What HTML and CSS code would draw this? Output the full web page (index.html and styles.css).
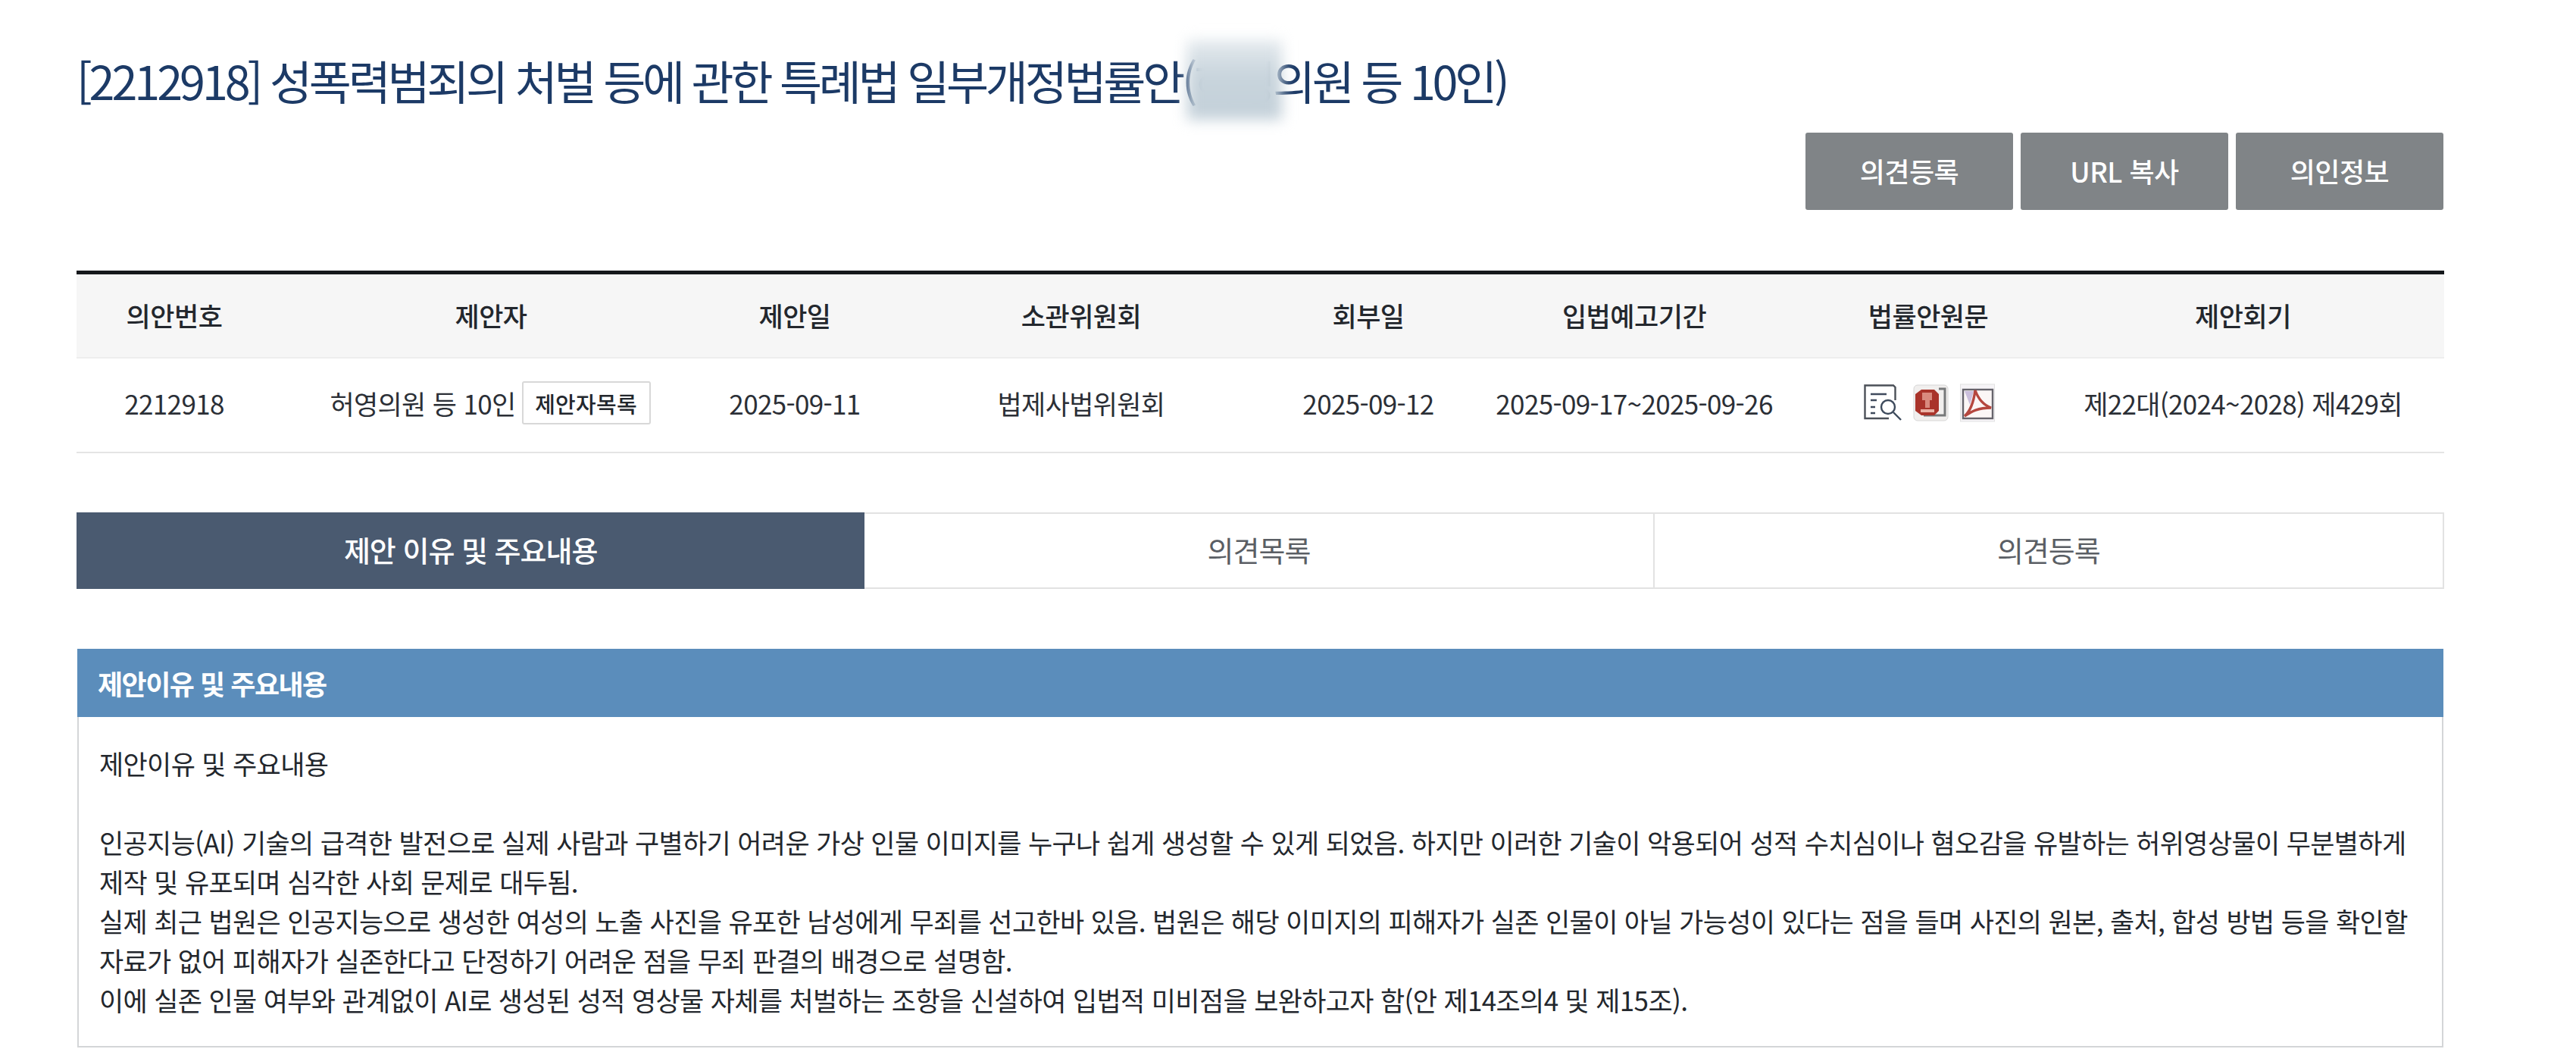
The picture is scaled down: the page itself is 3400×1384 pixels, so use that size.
FILE: index.html
```html
<!DOCTYPE html>
<html lang="ko">
<head>
<meta charset="utf-8">
<title>의안 상세</title>
<link rel="stylesheet" href="styles.css">
</head>
<body>
<main class="page">
  <h1 class="title"><span class="bill-no">[2212918]</span> 성폭력범죄의 처벌 등에 관한 특례법 일부개정법률안(<span class="masked">허영의</span>원 등 10인)</h1>
  <div class="actions">
    <a class="action">의견등록</a>
    <a class="action">URL 복사</a>
    <a class="action">의인정보</a>
  </div>
  <table class="info">
    <colgroup>
      <col class="c1"><col class="c2"><col class="c3"><col class="c4"><col class="c5"><col class="c6"><col class="c7"><col class="c8">
    </colgroup>
    <thead>
      <tr><th>의안번호</th><th>제안자</th><th>제안일</th><th>소관위원회</th><th>회부일</th><th>입법예고기간</th><th>법률안원문</th><th>제안회기</th></tr>
    </thead>
    <tbody>
      <tr>
        <td>2212918</td>
        <td><div class="proposer"><span>허영의원 등 10인</span><a class="mini">제안자목록</a></div></td>
        <td>2025-09-11</td>
        <td>법제사법위원회</td>
        <td>2025-09-12</td>
        <td>2025-09-17~2025-09-26</td>
        <td>
          <div class="icons">
            <svg class="ico" width="52" height="52" viewBox="0 0 52 52" fill="none">
              <path d="M34 46H2.5V2.5H40L42.5 5V22" stroke="#4b5058" stroke-width="2.4"/>
              <path d="M10 14H31M10 22H18M10 31H16M10 39H16" stroke="#3f4a5c" stroke-width="2.4"/>
              <circle cx="33" cy="31" r="9" fill="#fff" stroke="#3d4a5c" stroke-width="2.4"/>
              <path d="M40 38L50 48" stroke="#3d4a5c" stroke-width="2.4"/>
            </svg>
            <svg class="ico" width="48" height="52" viewBox="0 0 48 52" fill="none">
              <rect x="1" y="2" width="45" height="47" rx="5" fill="#f1efee" stroke="#d6d6d6"/>
              <path d="M34 7H42V42H14" stroke="#77797a" stroke-width="3"/>
              <path d="M11 8H28L34 14V36L28 42H11L3 36V14Z" fill="#a9332a"/>
              <path d="M12 12H25V22H22V32H16V22H12Z" fill="#d98a7e"/>
              <path d="M10 34H28V38H10Z" fill="#eab3a6"/>
            </svg>
            <svg class="ico" width="46" height="52" viewBox="0 0 46 52" fill="none">
              <rect x="0.5" y="1" width="45" height="49" fill="#f6f4f7" stroke="#e2e2e2"/>
              <rect x="4" y="8" width="39" height="38" fill="#fbf6f6" stroke="#66646c" stroke-width="2.4"/>
              <path d="M6 10H18L13 28Z" fill="#cbbfdc"/>
              <path d="M20 9C18 24 14 36 6 43C14 38 22 32 41 32C30 28 24 20 20 9Z" fill="none" stroke="#b5473f" stroke-width="3.4"/>
            </svg>
          </div>
        </td>
        <td>제22대(2024~2028) 제429회</td>
      </tr>
    </tbody>
  </table>
  <nav class="tabs">
    <a class="tab tab-on">제안 이유 및 주요내용</a>
    <a class="tab">의견목록</a>
    <a class="tab">의견등록</a>
  </nav>
  <section class="panel">
    <h2 class="panel-head">제안이유 및 주요내용</h2>
    <p class="panel-body">제안이유 및 주요내용<br><br>인공지능(AI) 기술의 급격한 발전으로 실제 사람과 구별하기 어려운 가상 인물 이미지를 누구나 쉽게 생성할 수 있게 되었음. 하지만 이러한 기술이 악용되어 성적 수치심이나 혐오감을 유발하는 허위영상물이 무분별하게<br>제작 및 유포되며 심각한 사회 문제로 대두됨.<br>실제 최근 법원은 인공지능으로 생성한 여성의 노출 사진을 유포한 남성에게 무죄를 선고한바 있음. 법원은 해당 이미지의 피해자가 실존 인물이 아닐 가능성이 있다는 점을 들며 사진의 원본, 출처, 합성 방법 등을 확인할<br>자료가 없어 피해자가 실존한다고 단정하기 어려운 점을 무죄 판결의 배경으로 설명함.<br>이에 실존 인물 여부와 관계없이 AI로 생성된 성적 영상물 자체를 처벌하는 조항을 신설하여 입법적 미비점을 보완하고자 함(안 제14조의4 및 제15조).</p>
  </section>
</main>
</body>
</html>
```
FILE: styles.css
```css
* { box-sizing: border-box; }
html, body { margin: 0; padding: 0; background: #fff; }
body {
  font-family: "Noto Sans CJK KR", "Noto Sans", sans-serif;
  color: #2b2f36;
  height: 1384px;
  overflow: hidden;
}
.page { width: 3125px; margin-left: 101px; }
.title {
  margin: 0;
  padding: 68px 0 0 0;
  height: 175px;
  font-size: 61px;
  line-height: 76px;
  font-weight: 400;
  letter-spacing: -4.3px;
  color: #1c3a66;
  white-space: nowrap;
}
.bill-no { letter-spacing: -4px; }
.masked { position: relative; }
.masked::after {
  content: "";
  position: absolute;
  left: -9px;
  right: 40px;
  top: -8px;
  bottom: -8px;
  background: linear-gradient(180deg, #e4eaee 0%, #c8d4dc 45%, #c3d0d9 100%);
  filter: blur(9px);
}
.actions { display: flex; justify-content: flex-end; gap: 10px; height: 102px; padding-right: 1px; }
.action {
  width: 274px;
  height: 102px;
  padding-bottom: 2px;
  display: flex;
  align-items: center;
  justify-content: center;
  background: #808487;
  border-radius: 3px;
  color: #fff;
  font-size: 36px;
  font-weight: 500;
  letter-spacing: -0.5px;
}
.info {
  width: 100%;
  margin-top: 80px;
  border-collapse: collapse;
  table-layout: fixed;
  border-top: 5px solid #15181c;
}
.c1 { width: 258px; } .c2 { width: 578px; } .c3 { width: 224px; } .c4 { width: 532px; }
.c5 { width: 226px; } .c6 { width: 476px; } .c7 { width: 300px; } .c8 { width: 531px; }
.info th {
  height: 112px;
  padding: 0 0 2px;
  background: #f6f6f6;
  font-size: 35px;
  font-weight: 500;
  letter-spacing: -0.5px;
  color: #23272d;
  border-bottom: 2px solid #eee;
}
.info td {
  height: 125px;
  padding: 0 0 5px;
  text-align: center;
  font-size: 35px;
  font-weight: 400;
  letter-spacing: -0.65px;
  color: #2b2f36;
  border-bottom: 2px solid #e4e4e4;
  white-space: nowrap;
}
.proposer { display: flex; align-items: center; justify-content: center; gap: 8px; padding-right: 2px; }
.mini {
  display: flex;
  align-items: center;
  justify-content: center;
  width: 170px;
  height: 57px;
  border: 2px solid #d8d8d8;
  border-radius: 3px;
  font-size: 29px;
  font-weight: 500;
  letter-spacing: 0.3px;
  color: #23272d;
}
.icons { display: flex; align-items: center; justify-content: center; gap: 14px; padding-left: 2px; }
.ico { display: block; flex: none; }
.tabs { display: flex; margin-top: 78px; height: 101px; }
.tab {
  flex: 1;
  display: flex;
  align-items: center;
  justify-content: center;
  padding-bottom: 3px;
  border: 2px solid #e2e2e2;
  border-left: 0;
  font-size: 38px;
  font-weight: 400;
  letter-spacing: -1px;
  color: #5a5e64;
}
.tab-on {
  background: #4a5a70;
  border: 0;
  color: #fff;
  font-weight: 500;
}
.panel { margin: 79px 1px 0; }
.panel-head {
  margin: 0;
  height: 90px;
  padding-left: 27px;
  display: flex;
  align-items: center;
  background: #5b8dbb;
  color: #fff;
  font-size: 36px;
  font-weight: 700;
  letter-spacing: -1.5px;
}
.panel-body {
  margin: 0;
  height: 436px;
  padding: 35px 0 0 27px;
  border: 2px solid #d4d6d8;
  border-top: 0;
  font-size: 35px;
  line-height: 52px;
  letter-spacing: -0.65px;
  color: #23272d;
  white-space: nowrap;
}
```
